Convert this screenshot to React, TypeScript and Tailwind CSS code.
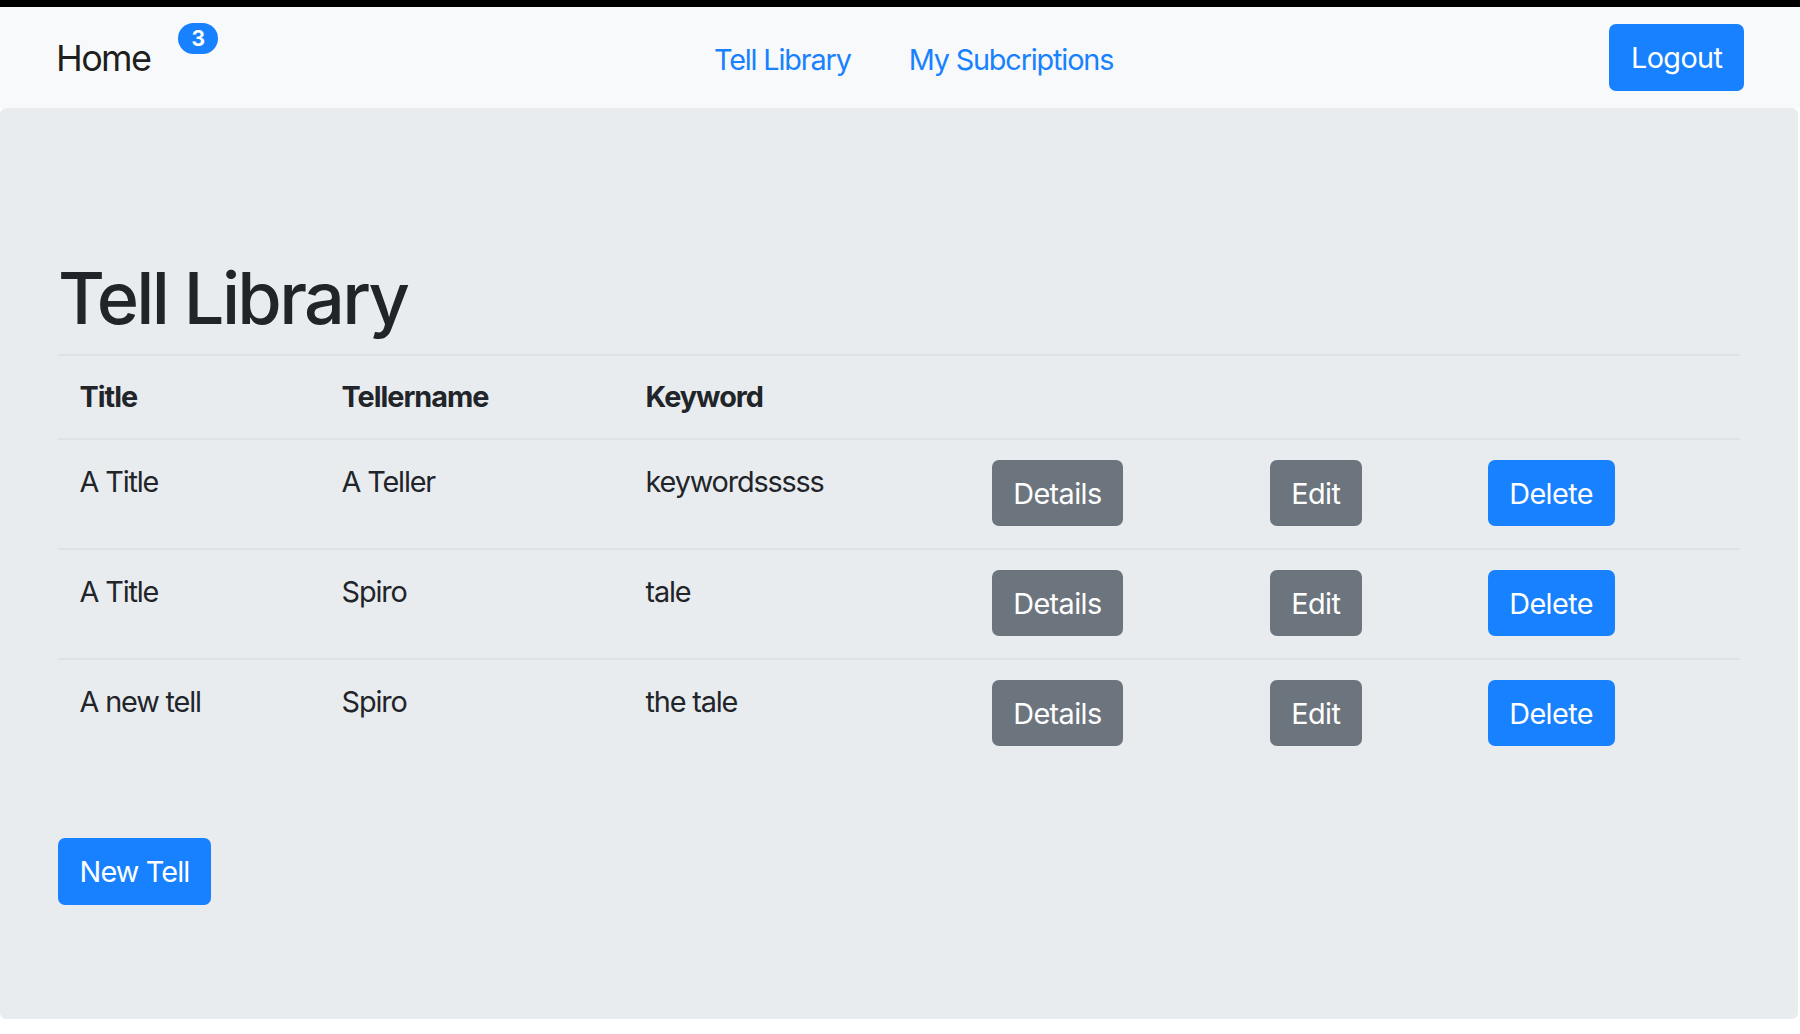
import React from 'react';

const rows = [
  { title: 'A Title', teller: 'A Teller', keyword: 'keywordsssss' },
  { title: 'A Title', teller: 'Spiro', keyword: 'tale' },
  { title: 'A new tell', teller: 'Spiro', keyword: 'the tale' },
];

const btn = 'inline-flex items-center h-[66px] px-[21.6px] rounded-[7px] text-white text-[28.8px] leading-[43px] tracking-[-0.02em]';

const App = () => {
  return (
    <div className="min-h-screen w-full bg-white font-['Inter','Liberation_Sans',sans-serif] text-[#212529]">
      {/* top strip */}
      <div className="h-[7px] bg-black"></div>

      {/* Navbar */}
      <nav className="h-[101px] bg-[#f8f9fa] flex items-center pl-[56px] pr-[56px]">
        <div className="flex items-start">
          <a className="text-[36px] leading-[54px] text-black/90 tracking-[-0.045em]">Home</a>
          <span className="ml-[28px] mt-[-8px] h-[31px] px-[13px] rounded-full bg-[#1781ff] text-white text-[21px] font-bold leading-[31px]">
            3
          </span>
        </div>
        <ul className="flex items-center ml-[496px] mt-[4px] gap-[58px] text-[28.8px] text-[#1781ff] tracking-[-0.04em]">
          <li>Tell Library</li>
          <li>My Subcriptions</li>
        </ul>
        <button className={`${btn} ml-auto h-[67px] bg-[#1781ff]`}>Logout</button>
      </nav>

      {/* Jumbotron */}
      <div className="bg-[#e9ecef] rounded-[6px] mr-[2px] pt-[147px] pb-[114px] px-[58px]">
        <h1 className="text-[72px] leading-[86px] font-medium tracking-[-0.037em] mb-[13px]">Tell Library</h1>

        <table className="w-full table-fixed text-[28.8px] leading-[43px] tracking-[-0.04em]">
          <colgroup>
            <col className="w-[262px]" />
            <col className="w-[304px]" />
            <col className="w-[346px]" />
            <col className="w-[278px]" />
            <col className="w-[218px]" />
            <col />
          </colgroup>
          <thead>
            <tr className="border-t-2 border-[#dee2e6]">
              <th className="text-left font-bold tracking-[-0.035em] px-[21.6px] pt-[19px] pb-[20px]">Title</th>
              <th className="text-left font-bold tracking-[-0.035em] px-[21.6px] pt-[19px] pb-[20px]">Tellername</th>
              <th className="text-left font-bold tracking-[-0.035em] px-[21.6px] pt-[19px] pb-[20px]">Keyword</th>
              <th></th>
              <th></th>
              <th></th>
            </tr>
          </thead>
          <tbody>
            {rows.map((r, i) => (
              <tr key={i} className="border-t-2 border-[#dee2e6] align-top">
                <td className="px-[21.6px] pt-[20px] pb-[22px]">{r.title}</td>
                <td className="px-[21.6px] pt-[20px] pb-[22px]">{r.teller}</td>
                <td className="px-[21.6px] pt-[20px] pb-[22px]">{r.keyword}</td>
                <td className="px-[21.6px] pt-[20px] pb-[22px]">
                  <button className={`${btn} bg-[#6c757d]`}>Details</button>
                </td>
                <td className="px-[21.6px] pt-[20px] pb-[22px]">
                  <button className={`${btn} bg-[#6c757d]`}>Edit</button>
                </td>
                <td className="px-[21.6px] pt-[20px] pb-[22px]">
                  <button className={`${btn} bg-[#1781ff]`}>Delete</button>
                </td>
              </tr>
            ))}
          </tbody>
        </table>

        <button className={`${btn} h-[67px] mt-[70px] bg-[#1781ff] tracking-[-0.03em]`}>New Tell</button>
      </div>
    </div>
  );
};

export default App;
